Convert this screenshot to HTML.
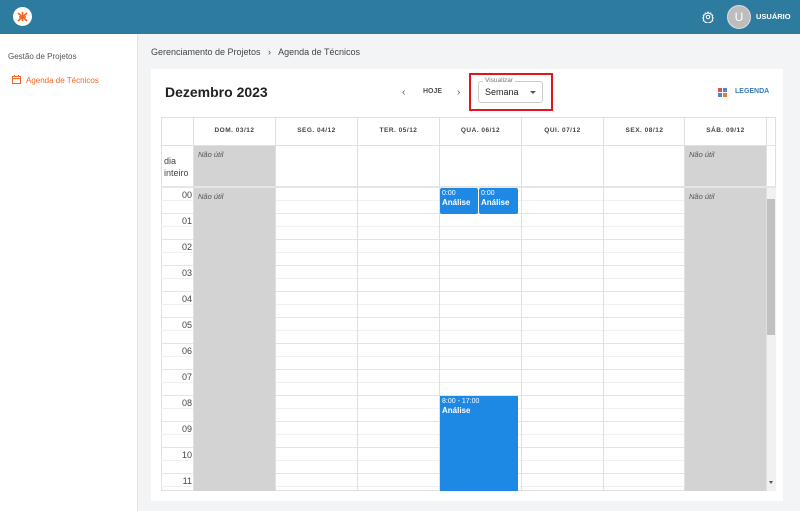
<!DOCTYPE html>
<html><head><meta charset="utf-8"><style>
*{margin:0;padding:0;box-sizing:border-box}
body{width:800px;height:511px;overflow:hidden;background:#f3f4f6;font-family:"Liberation Sans",sans-serif;position:relative}
.a{position:absolute}
.hdr{left:0;top:0;width:800px;height:34px;background:#2e7ba0}
.side{left:0;top:34px;width:138px;height:477px;background:#fff;border-right:1px solid #e2e2e2}
.card{left:151px;top:69px;width:632px;height:432px;background:#fff}
.dh{font-size:6.5px;color:#444;letter-spacing:.5px;text-align:center;top:127px;font-weight:bold}
.v{width:1px;background:#e0e0e0}
.gray{background:#d3d3d3}
.nu{font-size:7.5px;font-style:italic;color:#555}
.hr{font-size:9px;color:#444;right:608px;text-align:right}
.ev{background:#1e88e5;color:#fff;border-radius:2px;font-size:7px;padding:1px 2px;line-height:9px}
.ev b{font-size:8px}
</style></head><body>
<div class="a hdr"></div>
<div class="a" style="left:13px;top:7px;width:19px;height:19px;border-radius:50%;background:#fff"></div>
<svg class="a" style="left:15px;top:9px" width="15" height="15" viewBox="0 0 15 15"><g stroke="#f26522" stroke-width="1.6" fill="none"><path d="M3 4 L7.5 8 L12 4"/><path d="M3 12 L7.5 8 L12 12"/><path d="M7.5 3 V12"/><path d="M4 8 H11"/></g></svg>
<svg class="a" style="left:702px;top:11px" width="12" height="12" viewBox="0 0 24 24"><circle cx="12" cy="12" r="3.5" fill="none" stroke="#fff" stroke-width="2"/><path d="M12 2l2 3 3.5-1 .5 3.5 3.5 1-1 3.5 2 2-2 2 1 3.5-3.5 1-.5 3.5-3.5-1-2 3-2-3-3.5 1-.5-3.5-3.5-1 1-3.5-2-2 2-2-1-3.5 3.5-1 .5-3.5 3.5 1z" fill="none" stroke="#fff" stroke-width="2"/></svg>
<div class="a" style="left:727px;top:5px;width:24px;height:24px;border-radius:50%;background:#bdbdbd;border:1px solid #ddd;color:#fff;font-size:12px;text-align:center;line-height:22px">U</div>
<div class="a" style="left:756px;top:12px;font-size:7.5px;font-weight:bold;color:#fff">USUÁRIO</div>
<div class="a side"></div>
<div class="a" style="left:8px;top:52px;font-size:8px;color:#555">Gestão de Projetos</div>
<svg class="a" style="left:12px;top:75px" width="9" height="9" viewBox="0 0 9 9"><rect x=".5" y="1.5" width="8" height="7" fill="none" stroke="#f26522"/><path d="M.5 3.5H8.5M2.5 0V2M6.5 0V2" stroke="#f26522"/></svg>
<div class="a" style="left:26px;top:76px;font-size:8px;color:#f26522">Agenda de Técnicos</div>
<div class="a" style="left:151px;top:47px;font-size:9px;color:#444">Gerenciamento de Projetos &nbsp;&nbsp;›&nbsp;&nbsp; Agenda de Técnicos</div>
<div class="a card"></div>
<div class="a" style="left:165px;top:84px;font-size:14px;color:#222;font-weight:bold">Dezembro 2023</div>
<div class="a" style="left:402px;top:87px;font-size:10px;color:#555">‹</div>
<div class="a" style="left:423px;top:88px;font-size:7px;font-weight:bold;color:#555">HOJE</div>
<div class="a" style="left:457px;top:87px;font-size:10px;color:#555">›</div>
<div class="a" style="left:469px;top:73px;width:84px;height:38px;border:2px solid #e2141e"></div>
<div class="a" style="left:478px;top:81px;width:65px;height:22px;border:1px solid #ccc;border-radius:3px"></div>
<div class="a" style="left:483px;top:77px;font-size:6.5px;color:#777;background:#fff;padding:0 2px">Visualizar</div>
<div class="a" style="left:485px;top:87px;font-size:9px;color:#222">Semana</div>
<div class="a" style="left:530px;top:91px;border:3px solid transparent;border-top:3px solid #555"></div>
<div class="a" style="left:718px;top:88px;width:4px;height:4px;background:#d9534f"></div>
<div class="a" style="left:723px;top:88px;width:4px;height:4px;background:#5b7fd1"></div>
<div class="a" style="left:718px;top:93px;width:4px;height:4px;background:#5b7fd1"></div>
<div class="a" style="left:723px;top:93px;width:4px;height:4px;background:#e9773d"></div>
<div class="a" style="left:735px;top:88px;font-size:7px;font-weight:bold;color:#3a7ab8">LEGENDA</div>
<!-- table -->
<div class="a" style="left:161px;top:117px;width:615px;height:374px;border:1px solid #e0e0e0;background:#fff"></div>
<div class="a" style="left:161px;top:145px;width:615px;height:1px;background:#e0e0e0"></div>
<div class="a" style="left:161px;top:186px;width:615px;height:2px;background:#e6e6e6"></div>
<div class="a" style="left:161px;top:188px;width:605px;height:303px;background:repeating-linear-gradient(to bottom,transparent 0 12px,#f0f0f0 12px 13px,transparent 13px 25px,#e4e4e4 25px 26px)"></div>
<div class="a gray" style="left:194px;top:146px;width:81px;height:40px"></div>
<div class="a gray" style="left:685px;top:146px;width:81px;height:40px"></div>
<div class="a gray" style="left:194px;top:188px;width:81px;height:303px"></div>
<div class="a gray" style="left:685px;top:188px;width:81px;height:303px"></div>
<div class="a v" style="left:193px;top:117px;height:374px"></div>
<div class="a v" style="left:275px;top:117px;height:374px"></div>
<div class="a v" style="left:357px;top:117px;height:374px"></div>
<div class="a v" style="left:439px;top:117px;height:374px"></div>
<div class="a v" style="left:521px;top:117px;height:374px"></div>
<div class="a v" style="left:603px;top:117px;height:374px"></div>
<div class="a v" style="left:684px;top:117px;height:374px"></div>
<div class="a v" style="left:766px;top:117px;height:374px"></div>
<div class="a" style="left:767px;top:188px;width:9px;height:303px;background:#f1f1f1"></div>
<div class="a" style="left:767px;top:199px;width:8px;height:136px;background:#c1c1c1"></div>
<div class="a" style="left:769px;top:481px;border:2.5px solid transparent;border-top:3px solid #555"></div>
<div class="a dh" style="left:194px;width:81px">DOM. 03/12</div>
<div class="a dh" style="left:276px;width:81px">SEG. 04/12</div>
<div class="a dh" style="left:358px;width:81px">TER. 05/12</div>
<div class="a dh" style="left:440px;width:81px">QUA. 06/12</div>
<div class="a dh" style="left:522px;width:81px">QUI. 07/12</div>
<div class="a dh" style="left:604px;width:81px">SEX. 08/12</div>
<div class="a dh" style="left:685px;width:81px">SÁB. 09/12</div>
<div class="a" style="left:164px;top:155px;font-size:9px;color:#444;line-height:12px">dia<br>inteiro</div>
<div class="a nu" style="left:198px;top:150px">Não útil</div>
<div class="a nu" style="left:689px;top:150px">Não útil</div>
<div class="a nu" style="left:198px;top:192px">Não útil</div>
<div class="a nu" style="left:689px;top:192px">Não útil</div>
<div class="a hr" style="top:190px">00</div>
<div class="a hr" style="top:216px">01</div>
<div class="a hr" style="top:242px">02</div>
<div class="a hr" style="top:268px">03</div>
<div class="a hr" style="top:294px">04</div>
<div class="a hr" style="top:320px">05</div>
<div class="a hr" style="top:346px">06</div>
<div class="a hr" style="top:372px">07</div>
<div class="a hr" style="top:398px">08</div>
<div class="a hr" style="top:424px">09</div>
<div class="a hr" style="top:450px">10</div>
<div class="a hr" style="top:476px">11</div>
<div class="a ev" style="left:440px;top:188px;width:38px;height:26px">0:00<br><b>Análise</b></div>
<div class="a ev" style="left:479px;top:188px;width:39px;height:26px">0:00<br><b>Análise</b></div>
<div class="a ev" style="left:440px;top:396px;width:78px;height:95px;border-radius:0">8:00 - 17:00<br><b>Análise</b></div>
</body></html>
